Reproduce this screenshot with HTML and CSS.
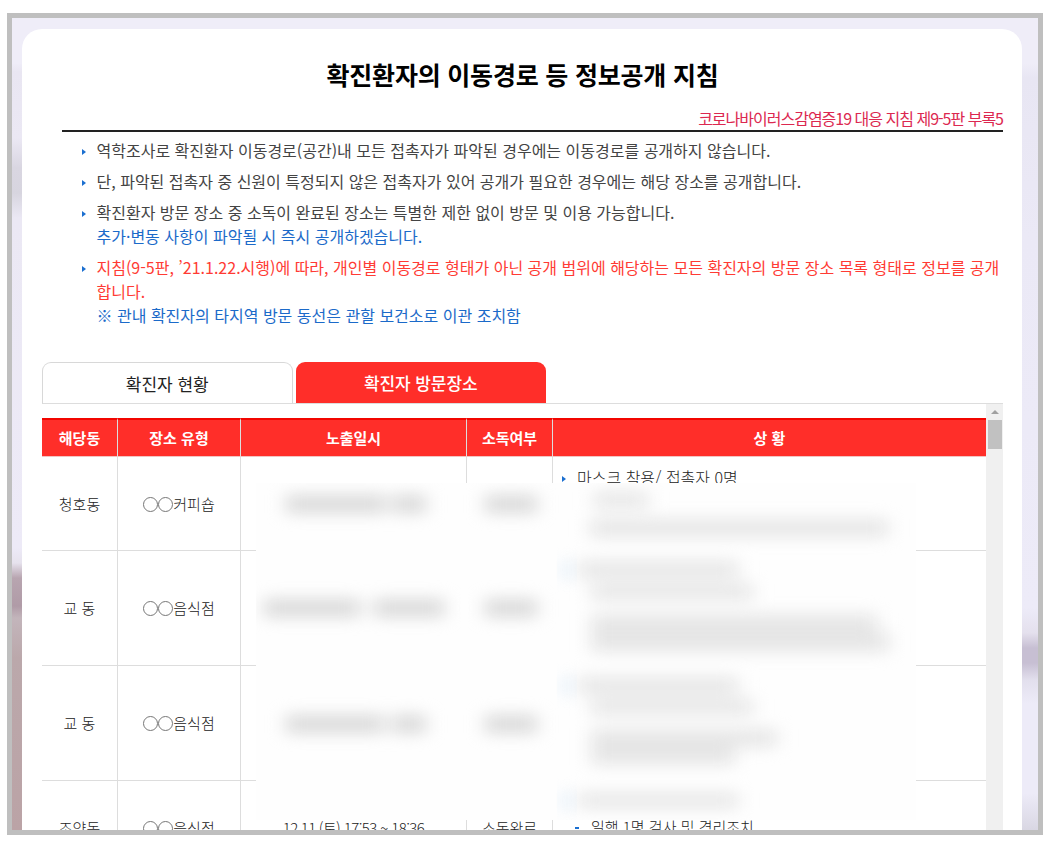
FILE: index.html
```html
<!DOCTYPE html>
<html lang="ko">
<head>
  <meta charset="UTF-8" />
  <meta name="viewport" content="width=device-width, initial-scale=1.0"/>
  <title>확진환자의 이동경로 등 정보공개 지침</title>
  <link rel="stylesheet" href="styles.css">
</head>
<body>
  <div class="frame">
    <div class="card">
      <h1 class="title">확진환자의 이동경로 등 정보공개 지침</h1>
      <p class="source">코로나바이러스감염증19 대응 지침 제9-5판 부록5</p>

      <ul class="guide">
        <li>역학조사로 확진환자 이동경로(공간)내 모든 접촉자가 파악된 경우에는 이동경로를 공개하지 않습니다.</li>
        <li>단, 파악된 접촉자 중 신원이 특정되지 않은 접촉자가 있어 공개가 필요한 경우에는 해당 장소를 공개합니다.</li>
        <li>확진환자 방문 장소 중 소독이 완료된 장소는 특별한 제한 없이 방문 및 이용 가능합니다.<br>
          <span class="blue">추가·변동 사항이 파악될 시 즉시 공개하겠습니다.</span></li>
        <li><span class="red">지침(9-5판, ’21.1.22.시행)에 따라, 개인별 이동경로 형태가 아닌 공개 범위에 해당하는 모든 확진자의 방문 장소 목록 형태로 정보를 공개<br>합니다.</span><br>
          <span class="blue">※ 관내 확진자의 타지역 방문 동선은 관할 보건소로 이관 조치함</span></li>
      </ul>

      <div class="tabs">
        <div class="tab">확진자 현황</div>
        <div class="tab active">확진자 방문장소</div>
      </div>

      <div class="scroll">
        <div class="list">
          <table>
            <colgroup>
              <col class="c-dong"><col class="c-type"><col class="c-date"><col class="c-clean"><col>
            </colgroup>
            <thead>
              <tr><th>해당동</th><th>장소 유형</th><th>노출일시</th><th>소독여부</th><th>상 황</th></tr>
            </thead>
            <tbody>
              <tr class="short">
                <td>청호동</td><td><i class="ring"></i><i class="ring"></i>커피숍</td><td></td><td></td>
                <td class="status"><p class="arrow">마스크 착용/ 접촉자 0명</p></td>
              </tr>
              <tr><td>교 동</td><td><i class="ring"></i><i class="ring"></i>음식점</td><td></td><td></td><td></td></tr>
              <tr><td>교 동</td><td><i class="ring"></i><i class="ring"></i>음식점</td><td></td><td></td><td></td></tr>
              <tr class="short">
                <td>조양동</td><td><i class="ring"></i><i class="ring"></i>음식점</td>
                <td class="date">12.11.(토) 17:53 ~ 18:36</td><td>소독완료</td>
                <td class="status last"><p class="dash">일행 1명 검사 및 격리조치</p></td>
              </tr>
            </tbody>
          </table>

          <!-- hidden personal details -->
          <svg class="mosaic" width="660" height="337" viewBox="0 0 660 337">
            <defs>
              <filter id="blur" x="-20%" y="-100%" width="140%" height="300%" color-interpolation-filters="sRGB">
                <feGaussianBlur stdDeviation="9 8"/>
              </filter>
            </defs>
            <rect width="660" height="337" fill="#fefefe"/>
            <g filter="url(#blur)" fill="#d9d9d9">
              <rect x="30" y="12" width="100" height="18"/>
              <rect x="136" y="12" width="34" height="18"/>
              <rect x="229" y="12" width="52" height="18"/>
              <rect x="8" y="116" width="96" height="18"/>
              <rect x="118" y="116" width="70" height="18"/>
              <rect x="229" y="116" width="52" height="18"/>
              <rect x="30" y="232" width="98" height="18"/>
              <rect x="136" y="232" width="34" height="18"/>
              <rect x="229" y="232" width="52" height="18"/>
            </g>
            <g filter="url(#blur)" fill="#e6e6e6">
              <rect x="338" y="9" width="54" height="16"/>
              <rect x="334" y="36" width="298" height="18"/>
              <rect x="322" y="78" width="160" height="17"/>
              <rect x="335" y="101" width="162" height="16"/>
              <rect x="335" y="131" width="286" height="18"/>
              <rect x="335" y="149" width="298" height="20"/>
              <rect x="322" y="194" width="160" height="17"/>
              <rect x="335" y="216" width="162" height="16"/>
              <rect x="335" y="246" width="186" height="18"/>
              <rect x="335" y="264" width="144" height="18"/>
              <rect x="322" y="310" width="160" height="15"/>
            </g>
            <g filter="url(#blur)" fill="#e4f0fb">
              <rect x="304" y="80" width="14" height="14"/>
              <rect x="304" y="196" width="14" height="14"/>
              <rect x="304" y="311" width="14" height="14"/>
            </g>
          </svg>
        </div>
        <div class="scrollbar">
          <span class="up"></span>
          <span class="thumb"></span>
        </div>
      </div>
    </div>
  </div>
</body>
</html>
```

FILE: styles.css
```css
* {
  margin: 0;
  padding: 0;
  box-sizing: border-box;
}

body {
  height: 841px;
  padding: 13px 8px 0 7px;
  background: #fff;
  font-family: 'Noto Sans CJK KR', 'Noto Sans', sans-serif;
  color: #444;
  overflow: hidden;
}

.frame {
  height: 822px;
  border: 5px solid #bfbfbf;
  padding: 11px 16px 0 10px;
  overflow: hidden;
  background:
    linear-gradient(#efedf8 0, #efedf8 45px, #e9e6f2 54px, #ebe8f4 120px, #d9d6e1 150px, #d7d5df 175px, #ebe8f4 200px, #edeaf7 530px, #e6e2ed 545px, #b8a5b0 560px, #b09ba7 588px, #c3b5bb 600px, #bba8ab 640px, #bba3a6 812px) left / 50% 100% no-repeat,
    linear-gradient(#efedf8 0, #efedf8 45px, #e8e6f3 60px, #ebe9f6 220px, #edebf8 590px, #e4e0ed 615px, #c7bfd3 630px, #c7bfd3 645px, #e2dfed 662px, #edebf8 685px, #edebf8 775px, #d9d7e3 812px) right / 50% 100% no-repeat;
}

.card {
  height: 820px;
  padding: 27px 19px 0 20px;
  border-radius: 20px;
  background: #fff;
}

.title {
  height: 50px;
  font-size: 25px;
  font-weight: 700;
  line-height: 37px;
  letter-spacing: -0.2px;
  text-align: center;
  color: #000;
}

.source {
  height: 26px;
  margin-left: 20px;
  border-bottom: 2px solid #222;
  font-size: 16px;
  line-height: 24px;
  letter-spacing: -1px;
  text-align: right;
  color: #dc2850;
}

.guide {
  height: 230px;
  padding: 6px 0 0 54.5px;
  list-style: none;
  font-size: 16px;
  line-height: 24px;
  white-space: nowrap;
}

.guide li {
  margin-bottom: 7px;
}

.guide li::before,
.arrow::before {
  content: '';
  display: inline-block;
  margin: 0 11px 2px -15px;
  border: solid transparent;
  border-width: 3px 0 3px 4px;
  border-left-color: #1b6fd0;
}

.blue {
  color: #1b6ac9;
}

.red {
  color: #ff3b34;
}

.tabs {
  display: flex;
  gap: 3px;
  height: 42px;
  border-bottom: 1px solid #ddd;
}

.tab {
  width: 250.5px;
  height: 42px;
  border: 1px solid #d8d8d8;
  border-bottom-color: #ddd;
  border-radius: 9px 9px 0 0;
  font-size: 17px;
  line-height: 41px;
  text-align: center;
  color: #222;
}

.tab.active {
  height: 41px;
  border: none;
  background: #ff2e29;
  font-weight: 500;
  line-height: 42px;
  letter-spacing: -0.1px;
  color: #fff;
}

.scroll {
  display: flex;
}

.list {
  position: relative;
  width: 944px;
  padding-top: 14px;
}

table {
  width: 944px;
  table-layout: fixed;
  border-collapse: separate;
  border-spacing: 0;
}

.c-dong {
  width: 75px;
}

.c-type {
  width: 123px;
}

.c-date {
  width: 226px;
}

.c-clean {
  width: 86px;
}

th {
  height: 39px;
  padding-bottom: 2px;
  border-top: 2px solid #f20500;
  border-bottom: 1px solid #f2c4c2;
  background: #ff2e29;
  font-size: 15px;
  font-weight: 700;
  color: #fff;
}

td {
  height: 115px;
  padding-bottom: 1px;
  border-bottom: 1px solid #ddd;
  font-size: 15px;
  font-weight: 300;
  text-align: center;
  white-space: nowrap;
  color: #222;
}

th + th,
td + td {
  border-left: 1px solid #ddd;
}

.short td {
  height: 94px;
}

.ring {
  display: inline-block;
  width: 15px;
  height: 15px;
  border: 1px solid #777;
  border-radius: 50%;
  vertical-align: -2px;
}

.date {
  letter-spacing: -0.6px;
}

td.status {
  padding: 8px 0 0 24px;
  font-size: 16px;
  line-height: 24px;
  text-align: left;
  vertical-align: top;
}

td.last {
  padding: 34px 0 0 38px;
  font-size: 15px;
}

.dash::before {
  content: '';
  display: inline-block;
  width: 4px;
  height: 2px;
  margin: 0 12px 4px -16px;
  background: #1b6fd0;
}

.mosaic {
  position: absolute;
  left: 214px;
  top: 79px;
}

.scrollbar {
  display: flex;
  flex-direction: column;
  align-items: center;
  width: 17px;
  padding-top: 6px;
  background: #f0f0f0;
}

.up {
  border: solid transparent;
  border-width: 0 4px 4px;
  border-bottom-color: #a0a0a0;
}

.thumb {
  width: 14px;
  height: 29px;
  margin-top: 6px;
  background: #c1c1c1;
}
```
